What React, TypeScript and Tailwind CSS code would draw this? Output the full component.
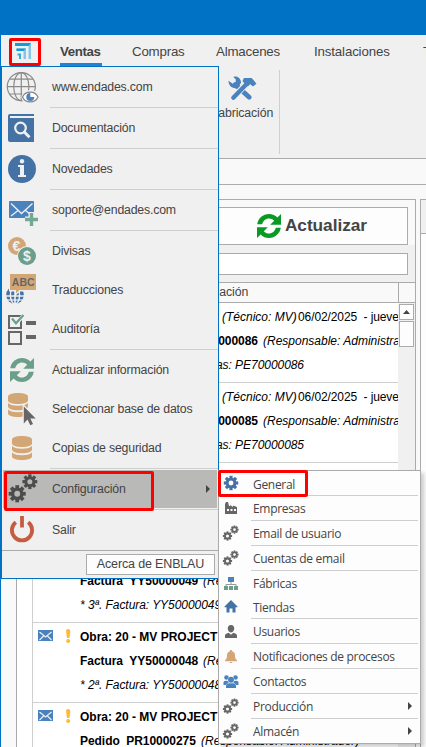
import type { ReactNode } from "react";

const TAN = "#d3a676";
const GREEN = "#6c9f8a";
const BLUE = "#4472a5";
const SKY = "#4a82bd";
const GREY = "#666666";

function Gear({ cx, cy, r, fill }: { cx: number; cy: number; r: number; fill: string }) {
  return (
    <g fill={fill}>
      {[0, 45, 90, 135, 180, 225, 270, 315].map((a) => (
        <rect key={a} x={cx - r * 0.22} y={cy - r} width={r * 0.44} height={r * 0.45} transform={`rotate(${a} ${cx} ${cy})`} />
      ))}
      <circle cx={cx} cy={cy} r={r * 0.54} fill="none" stroke={fill} strokeWidth={r * 0.4} />
    </g>
  );
}

function Refresh({ color, x = 0, y = 0 }: { color: string; x?: number; y?: number }) {
  return (
    <g transform={`translate(${x} ${y})`} fill={color}>
      <path d="M0.2 10.2C1.2 4.2 6 0 12 0C15.3 0 18.3 1.4 20.4 3.6L24 0V10.8H13.2L17.2 6.8C15.8 5.2 14 4.4 12 4.4C8.6 4.4 6 6.8 5.2 10.2Z" />
      <path d="M23.8 13.8C22.8 19.8 18 24 12 24C8.7 24 5.7 22.6 3.6 20.4L0 24V13.2H10.8L6.8 17.2C8.2 18.8 10 19.6 12 19.6C15.4 19.6 18 17.2 18.8 13.8Z" />
    </g>
  );
}

function Database({ x, y }: { x: number; y: number }) {
  return (
    <g transform={`translate(${x} ${y})`} fill={TAN}>
      <path d="M0 3.5C0 1.4 4.5 0 10 0S20 1.4 20 3.5V7.5C20 9.5 15.5 11 10 11S0 9.5 0 7.5Z" />
      <path d="M0 10C2 12.2 6 12.7 10 12.7S18 12.2 20 10V13.5C20 15.8 15.5 17.2 10 17.2S0 15.8 0 13.5Z" />
      <path d="M0 16.5C2 18.7 6 19.2 10 19.2S18 18.7 20 16.5V20.5C20 22.8 15.5 24 10 24S0 22.8 0 20.5Z" />
    </g>
  );
}

function TwinGears() {
  return (
    <>
      <Gear cx={8.5} cy={14} r={4.6} fill={GREY} />
      <Gear cx={15.5} cy={7.6} r={4.1} fill={GREY} />
    </>
  );
}

type Entry = { label: string; icon: ReactNode; box: string; h: string; line?: boolean; active?: boolean };

const entries: Entry[] = [
  {
    label: "www.endades.com", box: "2 67 50 40", h: "h-10", line: true,
    icon: (
      <>
        <g fill="none" stroke="#8a8a8a" strokeWidth="1.2">
          <circle cx="21.3" cy="86.6" r="14" />
          <ellipse cx="21.3" cy="86.6" rx="7.6" ry="14" />
          <path d="M21.3 72.6V100.6M7.3 86.6H35.3M9.7 79.2H33M9.7 94H33" />
        </g>
        <ellipse cx="30.3" cy="97" rx="9" ry="7" fill="#f0f0f0" />
        <path d="M22.5 97C25.5 90.5 35 90.5 38 97C35 103.5 25.5 103.5 22.5 97Z" fill="#fff" stroke="#858585" strokeWidth="1.2" />
        <path d="M30.3 93A4 4 0 1 0 34.3 97H30.3Z" fill={SKY} />
      </>
    ),
  },
  {
    label: "Documentación", box: "2 108 50 40", h: "h-10", line: true,
    icon: (
      <>
        <path d="M10 114H34V142H10Q8 142 8 140V116Q8 114 10 114Z" fill={BLUE} />
        <path d="M10 116H34V118H10Z" fill="#f0f0f0" />
        <circle cx="20.5" cy="128" r="5.3" fill="none" stroke="#f0f0f0" strokeWidth="2.2" />
        <path d="M24.3 132L29.5 137.2" stroke="#f0f0f0" strokeWidth="3" />
      </>
    ),
  },
  {
    label: "Novedades", box: "2 149 50 40", h: "h-10", line: true,
    icon: (
      <>
        <circle cx="22" cy="169" r="14" fill={BLUE} />
        <circle cx="22" cy="161.2" r="2.2" fill="#f0f0f0" />
        <path d="M18 165H24V175H26V177H18V175H20V167H18Z" fill="#f0f0f0" />
      </>
    ),
  },
  {
    label: "soporte@endades.com", box: "2 190 50 40", h: "h-10", line: true,
    icon: (
      <>
        <rect x="9" y="201" width="25" height="17" rx="1" fill={SKY} />
        <path d="M11 203.5L21.5 213.5L32.5 203.5M11 216L18 210.5M32.5 216L25.5 210.5" fill="none" stroke="#f0f0f0" strokeWidth="1.3" />
        <path d="M31.5 212V226.5M25 219.5H38.5" stroke="#f0f0f0" strokeWidth="6" />
        <path d="M31.5 213V226M25 219.5H38" stroke="#74a892" strokeWidth="3.4" />
      </>
    ),
  },
  {
    label: "Divisas", box: "2 231 50 39", h: "h-[39px]",
    icon: (
      <>
        <circle cx="17" cy="246" r="9" fill={TAN} />
        <text x="16.5" y="251.2" textAnchor="middle" fontFamily="Liberation Sans, sans-serif" fontWeight="bold" fontSize="14" fill="#f0f0f0">€</text>
        <circle cx="27" cy="256" r="10" fill="#f0f0f0" />
        <circle cx="27" cy="256" r="9" fill={GREEN} />
        <text x="27" y="261" textAnchor="middle" fontFamily="Liberation Sans, sans-serif" fontWeight="bold" fontSize="14" fill="#f0f0f0">$</text>
      </>
    ),
  },
  {
    label: "Traducciones", box: "2 270 50 39", h: "h-[39px]",
    icon: (
      <>
        <circle cx="15" cy="295" r="8.8" fill={BLUE} />
        <path d="M15 286V305M6 296H24" stroke="#f0f0f0" strokeWidth="1.6" />
        <ellipse cx="15" cy="295" rx="4.6" ry="9" fill="none" stroke="#f0f0f0" strokeWidth="1.4" />
        <path d="M7.5 300H22.5" stroke="#f0f0f0" strokeWidth="1.2" />
        <path d="M9 273H37V291.5H20L15 296V291.5H9Z" fill="#f0f0f0" />
        <path d="M10 274H36V290H19.5L16 293.5V290H10Z" fill={TAN} />
        <text x="23.2" y="286.2" textAnchor="middle" fontFamily="Liberation Sans, sans-serif" fontWeight="bold" fontSize="10.5" fill={GREY}>ABC</text>
      </>
    ),
  },
  {
    label: "Auditoría", box: "2 309 50 40", h: "h-10", line: true,
    icon: (
      <>
        <g fill="none" stroke={GREY} strokeWidth="2">
          <rect x="9" y="316" width="12" height="12" />
          <rect x="9" y="332" width="12" height="12" />
        </g>
        <path d="M26 323H36M26 337H36" stroke={GREY} strokeWidth="4" />
        <path d="M12 319L16 323.5L24 315" fill="none" stroke="#f0f0f0" strokeWidth="4" />
        <path d="M12 318.5L16 323.3L23.5 315" fill="none" stroke={GREEN} strokeWidth="2.2" />
      </>
    ),
  },
  { label: "Actualizar información", box: "2 350 50 39", h: "h-[39px]", icon: <Refresh color={GREEN} x={10} y={358} /> },
  {
    label: "Seleccionar base de datos", box: "2 389 50 39", h: "h-[39px]",
    icon: (
      <>
        <Database x={8} y={393} />
        <path d="M23.8 406.5V423.5L27.5 419.5L30.3 425.3L33 424L30.3 418.5H35.7Z" fill={GREY} stroke="#f0f0f0" strokeWidth="2.4" paintOrder="stroke" />
      </>
    ),
  },
  { label: "Copias de seguridad", box: "2 428 50 40", h: "h-10", line: true, icon: <Database x={12} y={436} /> },
  {
    label: "Configuración", box: "2 469 50 40", h: "h-10", line: true, active: true,
    icon: (
      <>
        <Gear cx={16.7} cy={494} r={9} fill="#4d4d4d" />
        <Gear cx={30} cy={481.3} r={7.8} fill="#4d4d4d" />
      </>
    ),
  },
  {
    label: "Salir", box: "2 510 50 40", h: "h-10",
    icon: (
      <g fill="none" stroke="#c55c40" strokeWidth="3.8">
        <path d="M15.8 522.3A10.1 10.1 0 1 0 28.2 522.3" />
        <path d="M22 516V527.5" />
      </g>
    ),
  },
];

type Sub = { label: string; h: string; icon: ReactNode; line?: boolean; arrow?: boolean };

const subs: Sub[] = [
  { label: "General", h: "h-[23px]", line: true, icon: <Gear cx={12} cy={11} r={7.2} fill={BLUE} /> },
  {
    label: "Empresas", h: "h-6", line: true,
    icon: <path d="M6 17V7L7 5H9L10 9H11V8L14 10V8.5L18 10V17ZM8 12V14H10V12ZM11.5 12V14H13.5V12ZM15 12V14H17V12Z" fillRule="evenodd" fill={GREY} />,
  },
  { label: "Email de usuario", h: "h-6", line: true, icon: <TwinGears /> },
  { label: "Cuentas de email", h: "h-6", line: true, icon: <TwinGears /> },
  {
    label: "Fábricas", h: "h-6",
    icon: (
      <>
        <rect x="9" y="5" width="6" height="5" fill={SKY} />
        <path d="M12 10V13M7 14V12.5H17V14" fill="none" stroke="#999" strokeWidth="1" />
        <path d="M5 14H9V18H5ZM10 14H14V18H10ZM15 14H19V18H15Z" fill={GREEN} />
      </>
    ),
  },
  { label: "Tiendas", h: "h-[23px]", line: true, icon: <path d="M12 5L18.5 11.5V12.3H16.5V17.5H13.5V13.5H10.5V17.5H7.5V12.3H5.5V11.5Z" fill={BLUE} /> },
  {
    label: "Usuarios", h: "h-6", line: true,
    icon: (
      <g fill={GREY}>
        <path d="M12 5C14.3 5 15.2 6.3 15.2 8.2C15.2 10.3 14 12.4 12 12.4S8.8 10.3 8.8 8.2C8.8 6.3 9.7 5 12 5Z" />
        <path d="M6 18V15.5C6 14 8 13.5 9.7 12.8L12 14.8L14.3 12.8C16 13.5 18 14 18 15.5V18Z" />
      </g>
    ),
  },
  {
    label: "Notificaciones de procesos", h: "h-6", line: true,
    icon: <path d="M12 5C12.8 5 13.2 5.5 13.2 6.2C15.2 6.8 16 8.4 16 10.5C16 13.5 17 14.2 18 15.5V16.3H6V15.5C7 14.2 8 13.5 8 10.5C8 8.4 8.8 6.8 10.8 6.2C10.8 5.5 11.2 5 12 5ZM10.5 17H13.5C13.3 18.4 10.7 18.4 10.5 17Z" fill={TAN} />,
  },
  {
    label: "Contactos", h: "h-6", line: true,
    icon: (
      <g fill={SKY}>
        <circle cx="7.5" cy="7.5" r="2.3" />
        <circle cx="16.5" cy="7.5" r="2.3" />
        <path d="M4.5 15V12C5.5 10.5 8 10.3 9.5 11.5V15ZM19.5 15V12C18.5 10.5 16 10.3 14.500 11.5V15Z" />
        <path d="M7 18V15.5C7.5 13.5 9.5 13.3 12 13.3S16.5 13.5 17 15.5V18Z" stroke="#fdfdfd" strokeWidth="1" paintOrder="stroke" />
        <circle cx="12" cy="9.8" r="3" stroke="#fdfdfd" strokeWidth="1" paintOrder="stroke" />
      </g>
    ),
  },
  { label: "Producción", h: "h-6", line: true, arrow: true, icon: <TwinGears /> },
  { label: "Almacén", h: "h-6", arrow: true, icon: <TwinGears /> },
];

type Row = { doc: string; note: string; docW: string; noteW: string };

const rows: Row[] = [
  { doc: "Pedido PE70000086", note: "* Compras: PE70000086", docW: "w-[178px] justify-end", noteW: "w-[224px] justify-end" },
  { doc: "Pedido PE70000085", note: "* Compras: PE70000085", docW: "w-[178px] justify-end", noteW: "w-[224px] justify-end" },
  { doc: "Factura  YY50000050", note: "* 4ª. Factura: YY50000050", docW: "w-[118px]", noteW: "w-[141px]" },
  { doc: "Factura  YY50000049", note: "* 3ª. Factura: YY50000049", docW: "w-[118px]", noteW: "w-[141px]" },
  { doc: "Factura  YY50000048", note: "* 2ª. Factura: YY50000048", docW: "w-[118px]", noteW: "w-[141px]" },
  { doc: "Pedido  PR10000275", note: "", docW: "w-[116px]", noteW: "w-[141px]" },
];

function ListRow({ row }: { row: Row }) {
  return (
    <div className="flex h-20 shrink-0 overflow-hidden border-b border-[#cfcfcf] pt-px text-black">
      <div className="flex w-[47px] shrink-0 gap-[12px] pt-[5px] pl-[5px]">
        <svg width="15" height="13" viewBox="0 0 15 13">
          <rect y="1" width="15" height="11" fill={SKY} />
          <path d="M1.5 3L7.5 8L13.5 3M1.5 11L5.5 7M13.5 11L9.5 7" fill="none" stroke="#e8f0f8" strokeWidth="1.2" />
        </svg>
        <svg width="7" height="15" viewBox="0 0 7 15">
          <path d="M1 2Q1 0 3.2 0T5.4 2L4.4 9H2Z" fill="#fdbb30" />
          <circle cx="3.2" cy="12" r="2" fill="#fdbb30" />
        </svg>
      </div>
      <div className="text-[12px] whitespace-pre">
        <div className="flex h-[25px] items-center">
          <b className="w-[142px] shrink-0">Obra: 20 - MV PROJECT</b>
          <i className="w-[76px] shrink-0">(Técnico: MV)</i>
          <span className="tracking-[-0.1px]">06/02/2025  - jueves</span>
        </div>
        <div className="flex h-6 items-center">
          <b className={`${row.docW} flex shrink-0 tracking-[-0.05px]`}>{row.doc}</b>
          <i className="ml-[5px]">(Responsable: Administrador)</i>
        </div>
        <i className={`${row.noteW} flex h-6 items-center tracking-[-0.05px]`}>{row.note}</i>
      </div>
    </div>
  );
}

function MainMenu() {
  return (
    <div className="absolute top-[66px] left-px flex h-[513px] w-[218px] flex-col border border-[#0072c6] bg-[#f0f0f0]">
      {entries.map((e) => (
        <div key={e.label}>
          <div className={`${e.h} flex items-center ${e.active ? "mx-px bg-[#b9b9b7] bg-clip-content py-px" : ""}`}>
            <svg className={`h-full shrink-0 ${e.active ? "-my-px -ml-px" : ""}`} width="50" viewBox={e.box}>{e.icon}</svg>
            <span className={`grow text-[12.3px] tracking-[-0.18px] ${e.h === "h-10" ? "" : "pt-[2px]"}`}>{e.label}</span>
            {e.active && <svg className="mr-[7px]" width="4" height="8" viewBox="0 0 4 8"><path d="M0 0L4 4L0 8Z" fill="#444" /></svg>}
          </div>
          {e.line && <div className="ml-12 h-px bg-[#cfcfcf]" />}
        </div>
      ))}
      <div className="flex grow justify-end border-t border-[#ababab] pt-[3px] pr-[3px]">
        <div className="flex h-[21px] w-[129px] items-center justify-center border border-[#ababab] bg-[#fdfdfd] text-[12.5px] tracking-[-0.15px]">Acerca de ENBLAU</div>
      </div>
    </div>
  );
}

function SubMenu() {
  return (
    <div className="absolute top-[470px] left-[218px] h-[274px] w-[203px] border border-[#ababab] bg-[#fdfdfd] pt-px font-['Open_Sans','Noto_Sans',sans-serif] shadow-[3px_3px_4px_rgba(0,0,0,0.2)]">
      {subs.map((s) => (
        <div key={s.label}>
          <div className={`${s.h} flex items-center`}>
            <svg className="shrink-0" width="34" height="23" viewBox="0 0 34 23">{s.icon}</svg>
            <span className="grow pt-[2px] text-[12px] leading-[20px] tracking-[-0.31px]">{s.label}</span>
            {s.arrow && <svg className="mr-2" width="4" height="8" viewBox="0 0 4 8"><path d="M0 0L4 4L0 8Z" fill="#444" /></svg>}
          </div>
          {s.line && <div className="mr-[2px] ml-8 h-px bg-[#cfcfcf]" />}
        </div>
      ))}
    </div>
  );
}

export default function App() {
  return (
    <div className="relative flex h-[747px] w-[426px] flex-col overflow-hidden bg-[#f9f9f9] font-['Liberation_Sans',Arial,sans-serif] text-[#444]">
      <div className="h-[35px] shrink-0 bg-[#0072c6]" />
      <div className="flex min-h-0 grow flex-col border-l border-[#0072c6]">
        <div className="flex h-[31px] shrink-0 overflow-hidden bg-[#f0f0f0] text-[13.3px] leading-[33px] whitespace-nowrap">
          <svg className="mt-[8px] ml-[14px] shrink-0" width="17" height="17" viewBox="0 0 17 17">
            <path d="M0 0H16V16H13.5V3H0Z" fill="#85c6e6" />
            <path d="M0 0H16L13.500 3H0Z" fill="#119bd8" />
            <path d="M1.500 5.500H11V16H8.500V8H1.500Z" fill="#85c6e6" />
            <path d="M1.500 5.500H11L8.500 8H1.500Z" fill="#119bd8" />
            <path d="M2.500 10.500H6V16H4V12.500H2.500Z" fill="#3aa9dc" />
          </svg>
          <b className="ml-[28px] w-[42px] shrink-0 border-b-3 border-[#2383d2] tracking-[-0.4px]">Ventas</b>
          <span className="ml-[30px] w-[84px] shrink-0 tracking-[-0.2px]">Compras</span>
          <span className="w-[98px] shrink-0 tracking-[-0.2px]">Almacenes</span>
          <span className="w-[109px] shrink-0 tracking-[-0.15px]">Instalaciones</span>
          <span className="shrink-0">Taller</span>
        </div>
        <div className="flex h-[93px] shrink-0 border-b border-[#ababab] bg-[#f0f0f0] pt-1 pl-[205px]">
          <div className="flex h-[84px] w-[74px] flex-col items-center border-r border-[#cfcfcf] pr-px text-[12.3px]">
            <svg className="mt-[5px]" width="30" height="27" viewBox="0 0 30 28">
              <g stroke={SKY} fill="none">
                <path d="M8 10L22.5 23" strokeWidth="5" strokeLinecap="round" />
                <path d="M6 23L19 10" strokeWidth="6.5" stroke="#f0f0f0" />
                <path d="M6 23.5L20 9" strokeWidth="4.5" strokeLinecap="round" />
              </g>
              <path d="M17 3H25L30 9L26.5 12L23.5 9.5L21 12L15.5 6.5Z" fill={SKY} />
              <path d="M6 2C10 0.5 14 3.5 14 8L11 13C6 15 1 12 1 6L5.5 9L8.5 7.5V4.5Z" fill={SKY} />
            </svg>
            <span className="leading-[22px] tracking-[-0.1px]">Fabricación</span>
          </div>
        </div>
        <div className="h-[26px] shrink-0 border-b border-[#ababab]" />
        <div className="flex min-h-0 grow pt-[14px]">
          <div className="ml-[15px] flex w-[400px] shrink-0 flex-col overflow-hidden border-t border-r border-l border-[#ababab] bg-[#f0f0f0]">
            <div className="h-[45px] shrink-0 bg-[#f9f9f9] px-[7px] pt-[7px]">
              <div className="flex h-[38px] items-center justify-end border border-[#ababab] bg-[#fdfdfd] pr-[40px] text-[17.3px] font-bold tracking-[-0.05px]">
                <svg className="mr-[4px]" width="24" height="24" viewBox="0 0 24 24"><Refresh color="#0a9a24" /></svg>
                Actualizar
              </div>
            </div>
            <div className="mx-[7px] mt-2 h-[22px] shrink-0 border border-[#ababab] bg-white" />
            <div className="mt-[7px] flex h-[21px] shrink-0 items-center border-y border-[#ababab] bg-[#f9f9f9] text-[12.3px]">
              <div className="flex h-full w-[382px] items-center border-r border-[#ababab] pl-[168px] tracking-[-0.1px]">Información</div>
            </div>
            <div className="flex min-h-0 grow">
              <div className="w-[16px] shrink-0 border-r border-[#cfcfcf] bg-white" />
              <div className="flex w-[365px] shrink-0 flex-col overflow-hidden bg-white">
                {rows.map((r) => <ListRow key={r.doc} row={r} />)}
              </div>
              <div className="flex w-[17px] flex-col items-center gap-px pt-px">
                <div className="flex h-[16px] w-[15px] shrink-0 items-center justify-center border border-[#ababab] bg-[#fdfdfd]">
                  <svg width="7" height="4" viewBox="0 0 7 4"><path d="M0 4L3.5 0L7 4Z" fill="#444" /></svg>
                </div>
                <div className="h-[26px] w-[15px] shrink-0 border border-[#ababab] bg-[#fdfdfd]" />
              </div>
            </div>
          </div>
          <div className="ml-[4px] grow border-t border-l border-[#ababab] bg-[#fdfdfd]">
            <div className="h-[34px] border-b border-[#ababab] bg-[#f0f0f0]" />
          </div>
        </div>
      </div>
      <MainMenu />
      <SubMenu />
      <div className="absolute top-[38px] left-[9px] h-[28px] w-[32px] rounded-[2px] border-3 border-[#fe0000]" />
      <div className="absolute top-[471px] left-[4px] h-[40px] w-[150px] rounded-[2px] border-3 border-[#fe0000]" />
      <div className="absolute top-[470px] left-[218px] h-[27px] w-[90px] rounded-[2px] border-3 border-[#fe0000]" />
    </div>
  );
}
